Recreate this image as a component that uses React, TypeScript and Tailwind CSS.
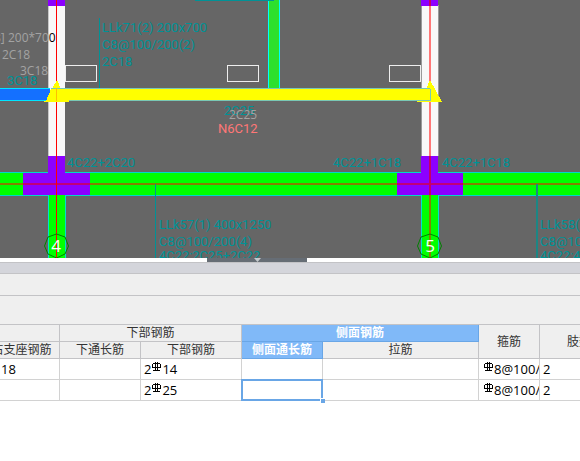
import React from "react";

const CadText = ({ x, y, children }: { x: number; y: number; children: string }) => (
  <text x={x} y={y} className="fill-[#009296] font-['Roboto',sans-serif] text-[13px]">
    {children}
  </text>
);

const ViewText = ({ x, y, children }: { x: number; y: number; children: React.ReactNode }) => (
  <text x={x} y={y} className="fill-[#a3a3a3] font-['Open_Sans',sans-serif] text-[12px]">
    {children}
  </text>
);

const Rebar = () => (
  <svg
    className="ml-px mb-1 shrink-0"
    width="10"
    height="10"
    viewBox="0 0 10 10"
    fill="none"
    stroke="#000"
    shapeRendering="crispEdges"
    aria-hidden="true"
  >
    <path d="M3.500 0V9M5.500 0V9M1 1.500H8M0.500 2V6M8.500 2V6M1 5.500H8M1 8.500H8" />
  </svg>
);

const Plan = () => (
  <svg className="block w-full h-[258px] bg-[#666666]" shapeRendering="crispEdges" role="img" aria-label="Beam plan">
    {/* Columns */}
    <rect x="48" y="5" width="17" height="152" fill="#f8f8f8" />
    <path d="M48.500 5V156" stroke="#c8c8c8" />
    <rect x="421" y="5" width="17" height="152" fill="#f8f8f8" />
    <path d="M421.500 5V156M438.500 5V156" stroke="#999" />
    <rect x="48" y="0" width="17" height="6" fill="#8c00ff" />
    <rect x="421" y="0" width="17" height="6" fill="#8c00ff" />

    {/* Labels left of axis 4 */}
    <ViewText x={-6} y={42}>
      8] 200*70<tspan fill="#000">0</tspan>
    </ViewText>
    <ViewText x={2} y={59}>2C18</ViewText>
    <ViewText x={20} y={75}>3C18</ViewText>
    <CadText x={7} y={85}>3C18</CadText>

    {/* Green beams */}
    <rect x="268" y="0" width="12" height="89" fill="#2de02d" />
    <path d="M268.500 0V89M279.500 0V89" stroke="#00ffff" />
    <path d="M195 0.500H274" stroke="#009296" />
    <rect x="0" y="172" width="100%" height="23" fill="#00ff00" />
    <path d="M0 172.500H3000M0 195.500H3000" stroke="#00d8c8" />
    <rect x="48" y="195" width="17" height="63" fill="#00ff00" />
    <rect x="421" y="195" width="17" height="63" fill="#00ff00" />
    <path d="M48.500 195V258M65.500 195V258M421.500 195V258M438.500 195V258" stroke="#00e0d0" />
    <path d="M0 184H3000" stroke="#857f00" strokeWidth="2" />

    {/* Junctions */}
    <path d="M48 156H65V173H90V195H23V173H48Z" fill="#8c00ff" />
    <path d="M421 156H438V173H463V195H397V173H421Z" fill="#8c00ff" />
    <path d="M23 184H90M397 184H463" stroke="#c00078" strokeWidth="2" />

    {/* Selected beam */}
    <rect x="0" y="89" width="50" height="12" fill="#1470ff" />
    <path d="M0 88.500H50M0 100.500H50" stroke="#00e5ff" />
    <path d="M56.500 0V258" stroke="#ff0000" />
    <path d="M430 6V156" stroke="#ff7777" strokeWidth="2" />
    <path d="M430 0V6M430 156V195" stroke="#c50065" strokeWidth="2" />
    <path d="M430 195V258" stroke="#857f00" strokeWidth="2" />
    <path d="M46 101L51 89H52L57 80L61 89H426L430 80L442 102H417V101H69V102H44V101Z" fill="#ffff00" />
    <path d="M51 88.500H430M69 100.500H430V89" fill="none" stroke="#79c8b5" />
    <path d="M56.500 88V101" stroke="#ffc000" />

    <g fill="none" stroke="#eeeeee">
      <rect x="65.500" y="65.500" width="31" height="16" />
      <rect x="227.500" y="65.500" width="31" height="16" />
      <rect x="389.500" y="65.500" width="31" height="16" />
    </g>

    {/* Annotations */}
    <path d="M99.500 18V88M155.500 184V258" stroke="#009296" />
    <path d="M537 184V258" stroke="#1c8684" strokeWidth="2" />
    <CadText x={102} y={32}>LLk71(2) 200x700</CadText>
    <CadText x={102} y={49}>C8@100/200(2)</CadText>
    <CadText x={102} y={66}>2C18</CadText>
    <CadText x={224} y={115}>2C25</CadText>
    <ViewText x={229} y={119}>2C25</ViewText>
    <text x="218" y="133" className="fill-[#ff7777] font-['Roboto',sans-serif] text-[13px]">N6C12</text>
    <CadText x={67} y={167}>4C22+2C20</CadText>
    <CadText x={333} y={167}>4C22+1C18</CadText>
    <CadText x={442} y={167}>4C22+1C18</CadText>
    <CadText x={159} y={229}>LLk57(1) 400x1250</CadText>
    <CadText x={159} y={246}>C8@100/200(4)</CadText>
    <CadText x={159} y={260}>4C22;2C25+2C22</CadText>
    <CadText x={540} y={229}>LLk58(1) 400x1250</CadText>
    <CadText x={540} y={246}>C8@100/200(4)</CadText>
    <CadText x={540} y={260}>4C22;4C22</CadText>

    {/* Axis bubbles */}
    <g fill="none" stroke="#008000" shapeRendering="auto">
      <path d="M56.500 234L65 237L68.500 246L65 254L56.500 258L48 254L44.500 246L48 237Z" />
      <path d="M430 234L438 237L441.500 246L438 254L430 258L421 254L417.500 246L421 237Z" />
    </g>
    <g textAnchor="middle" className="fill-white font-['Open_Sans',sans-serif] text-[17px]">
      <text x="56" y="252">4</text>
      <text x="430" y="252">5</text>
    </g>
  </svg>
);

const rows = [
  { support: "18", bottom: "14", stirrup: "8@100/", legs: "2", active: false },
  { support: "", bottom: "25", stirrup: "8@100/", legs: "2", active: true },
];

const head = "border-r border-b border-[#c3c3c6] p-0 font-normal";
const picked = "border-r border-b border-[#69a6e6] bg-[#80b9f8] p-0 font-bold text-white";
const cell = "border-r border-b border-[#d2d2d2] p-0";

const RebarTable = () => (
  <div className="overflow-hidden bg-white pb-15">
    <table className="-ml-4 w-[635px] table-fixed border-separate border-spacing-0 text-[12px] leading-4 text-[#333333]">
      <colgroup>
        <col className="w-[76px]" />
        <col className="w-[81px]" />
        <col className="w-[101px]" />
        <col className="w-[81px]" />
        <col className="w-[156px]" />
        <col className="w-[61px]" />
        <col className="w-[79px]" />
      </colgroup>
      <thead className="bg-[#efefef]">
        <tr className="h-[17px]">
          <th className={head}></th>
          <th className={head} colSpan={2}>下部钢筋</th>
          <th className={picked} colSpan={2}>侧面钢筋</th>
          <th className={head} rowSpan={2}>箍筋</th>
          <th className={head} rowSpan={2}>肢数</th>
        </tr>
        <tr className="h-[17px]">
          <th className={head}>右支座钢筋</th>
          <th className={head}>下通长筋</th>
          <th className={head}>下部钢筋</th>
          <th className={picked}>侧面通长筋</th>
          <th className={head}>拉筋</th>
        </tr>
      </thead>
      <tbody className="text-[13px] text-black">
        {rows.map((row) => (
          <tr key={row.bottom} className="h-[21px]">
            <td className={`${cell} pl-[17px]`}>{row.support}</td>
            <td className={cell}></td>
            <td className={`${cell} pl-[3px]`}>
              <div className="flex items-center">2<Rebar />{row.bottom}</div>
            </td>
            <td className={cell}>
              {row.active && (
                <div className="relative -m-px h-[22px] border-2 border-[#69a6e6]">
                  <span className="absolute -right-1 -bottom-1 h-[5px] w-[5px] border-t border-l border-white bg-[#69a6e6]" />
                </div>
              )}
            </td>
            <td className={cell}></td>
            <td className={`${cell} overflow-hidden pl-1`}>
              <div className="flex items-center"><Rebar />{row.stirrup}</div>
            </td>
            <td className={`${cell} pl-[3px]`}>{row.legs}</td>
          </tr>
        ))}
      </tbody>
    </table>
  </div>
);

export default function App() {
  return (
    <div className="min-h-screen w-full overflow-hidden bg-white font-['Open_Sans','Noto_Sans_CJK_SC',sans-serif]">
      <Plan />
      {/* Splitter with its collapse handle */}
      <div className="flex h-1 pl-[207px]">
        <button type="button" aria-label="Collapse panel" className="flex h-1 w-[100px] justify-center bg-[#666d75]">
          <svg width="7" height="4" viewBox="0 0 7 4" aria-hidden="true">
            <path d="M0 0H7L3.500 4Z" fill="#c4c8cc" />
          </svg>
        </button>
      </div>
      <div className="h-3 border-y border-[#c3c3c6] bg-[#d4d5db]" />
      <div className="h-[22px] border-b border-[#c3c3c6] bg-[#efefef]" />
      <div className="h-[29px] border-b border-[#c3c3c6] bg-[#efefef]" />
      <RebarTable />
    </div>
  );
}
